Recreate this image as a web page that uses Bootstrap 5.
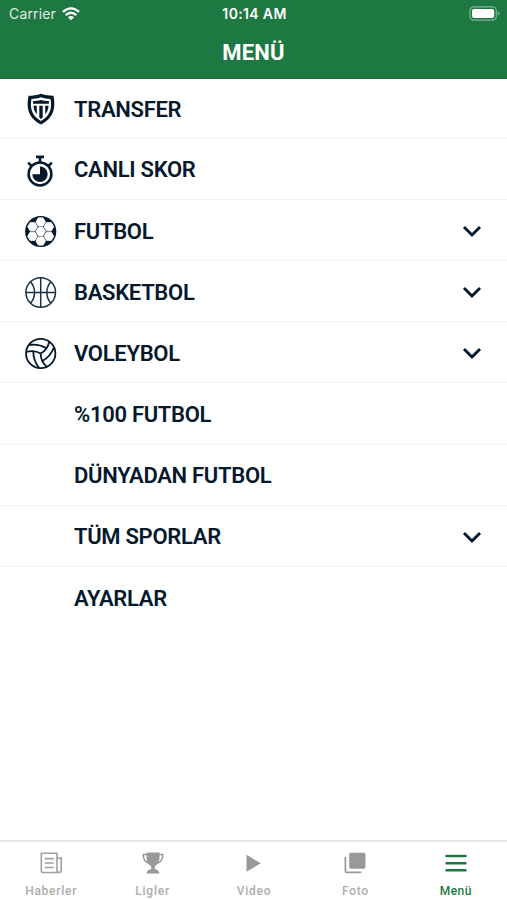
<!DOCTYPE html>
<html lang="tr">
<head>
<meta charset="utf-8">
<meta name="viewport" content="width=device-width, initial-scale=1">
<title>Menü</title>
<link href="https://cdn.jsdelivr.net/npm/bootstrap@5.3.0/dist/css/bootstrap.min.css" rel="stylesheet">
<style>
body{font-family:Roboto,"Liberation Sans",sans-serif;color:#05192d;height:100vh;overflow:hidden}
svg{display:block;flex:none}
.app-head{background:#1d7841;height:79px;border-bottom:1px solid #1a6c3a}
.status-bar{height:27px;padding:0 7px 0 9px;font:400 14px/27px Inter,sans-serif}
.status-bar>div{flex:1 1 0}
.clock{font-weight:600;font-size:14px;letter-spacing:.35px}
.carrier{color:#e0efe5;letter-spacing:.15px}
.app-title{font-size:22px;font-weight:700;line-height:51px;letter-spacing:.15px;margin:0}
.menu-row{height:61.15px;border:0;border-bottom:1px solid #f3f3f3;border-radius:0;padding:3px 25px 0 24px;color:#05192d;background:#fff}
.menu-row:first-child{height:59.8px}
.menu-row:last-child{border-bottom:0}
.menu-label{font-size:22px;font-weight:600;line-height:26px;letter-spacing:-.3px;margin-left:17px;white-space:nowrap}
.menu-icon{width:33px;height:33px}
.tab-strip{height:60px;border-top:2px solid #e8e8e8;background:#fff}
.tab-strip .nav-link{padding:9px 0 0 1px;color:#adadad;font:500 12px/14px Roboto,sans-serif;letter-spacing:.75px}
.tab-strip .nav-link.active{color:#1d7841;letter-spacing:.5px;padding-left:0;padding-right:1px}
.tab-strip svg{margin-bottom:9px}
</style>
</head>
<body class="d-flex flex-column bg-white">
<header class="app-head text-white flex-shrink-0">
  <div class="status-bar d-flex align-items-center">
    <div class="carrier d-flex align-items-center gap-2"><span>Carrier</span>
      <svg width="18" height="14" viewBox="0 0 18 14" fill="none" stroke="#fff" stroke-width="2.3" style="margin-left:-2px"><path d="M.9 4.9Q9-2.2 17.1 4.9"/><path d="M3.7 8.1Q9 3.4 14.3 8.1"/><path d="M9 13.3 5.9 10.3Q9 7.7 12.1 10.3Z" fill="#fff" stroke="none"/></svg>
    </div>
    <div class="clock text-center text-nowrap">10:14 AM</div>
    <div class="d-flex justify-content-end">
      <svg width="31" height="15" viewBox="0 0 31 15"><rect x=".9" y=".9" width="26.4" height="13.2" rx="3.8" fill="none" stroke="#7db592" stroke-width="1.2"/><rect x="3" y="3" width="22.2" height="9" rx="2" fill="#fff"/><path d="M28.8 5.2q1.7.8 1.7 2.3t-1.7 2.3z" fill="#7db592"/></svg>
    </div>
  </div>
  <h1 class="app-title text-center">MENÜ</h1>
</header>

<main class="list-group list-group-flush flex-grow-1">
  <a class="menu-row list-group-item d-flex align-items-center" href="#">
    <svg class="menu-icon" viewBox="0 0 33 33"><path d="M17 .8c4 1.500 8.300 1.800 12.400 2C31.800 13.500 30.500 25 17 31.600 3.500 25 2.200 13.500 4.600 2.800c4.100 0 8.400-.5 12.400-2z" fill="#05192d"/><path d="M17 4.300c3.200 1.100 6.300 1.500 9.500 1.600C28.200 14 26.800 22.300 17 28 7.200 22.300 5.800 14 7.500 5.900 10.700 5.800 13.800 5.400 17 4.300z" fill="#fff"/><path d="M9.200 8c2.900-.1 5.300-.4 7.800-1 2.500.6 4.900.9 7.800 1l.1 2.700H9z" fill="#05192d"/><path d="M9.400 12.700h3.400v8.600c-2-2.200-3.100-5-3.400-8.600zM15.300 12.700h3.400v11.800L17 26l-1.700-1.500zM21.200 12.700h3.400c-.3 3.600-1.400 6.400-3.400 8.600z" fill="#05192d"/></svg>
    <span class="menu-label">TRANSFER</span>
  </a>
  <a class="menu-row list-group-item d-flex align-items-center" href="#">
    <svg class="menu-icon" viewBox="0 0 33 33" fill="none" stroke="#05192d"><circle cx="16" cy="20" r="11.400" stroke-width="2.500"/><path d="M12 2.900h8" stroke-width="2.700"/><path d="M16 3v6" stroke-width="2.600"/><path d="M4.200 8.700l3 3M27.800 8.700l-3 3" stroke-width="2.600"/><path d="M16 20V12.600a7.700 7.700 0 1 1-7.700 7.700H16z" fill="#05192d" stroke="none"/></svg>
    <span class="menu-label">CANLI SKOR</span>
  </a>
  <a class="menu-row list-group-item d-flex align-items-center" href="#">
    <svg class="menu-icon" viewBox="-16.700 -16.500 33 33"><defs><path id="hex" d="M-4.700 0-2.350-4.070H2.350L4.700 0 2.350 4.070H-2.350z"/></defs><circle r="15.600" fill="#05192d"/><g fill="#fff" stroke="#fff" stroke-width="1" stroke-linejoin="round"><use href="#hex"/><use href="#hex" y="-9.500"/><use href="#hex" y="9.500"/><use href="#hex" x="-8.230" y="-4.750"/><use href="#hex" x="-8.230" y="4.750"/><use href="#hex" x="8.230" y="-4.750"/><use href="#hex" x="8.230" y="4.750"/></g></svg>
    <span class="menu-label">FUTBOL</span>
    <svg class="ms-auto" width="20" height="13" viewBox="0 0 20 13" fill="none" stroke="#05192d" stroke-width="2.900"><path d="M2 2l8 8 8-8"/></svg>
  </a>
  <a class="menu-row list-group-item d-flex align-items-center" href="#">
    <svg class="menu-icon" viewBox="0 0 33 33" fill="none" stroke="#1b3043" stroke-width="1.500"><circle cx="16.700" cy="16.500" r="14.800"/><path d="M16.700 1.600v29.800M1.800 16.500h29.800M6.500 5.800c5.400 6 5.400 15.400 0 21.400M26.900 5.800c-5.400 6-5.400 15.400 0 21.400"/></svg>
    <span class="menu-label">BASKETBOL</span>
    <svg class="ms-auto" width="20" height="13" viewBox="0 0 20 13" fill="none" stroke="#05192d" stroke-width="2.900"><path d="M2 2l8 8 8-8"/></svg>
  </a>
  <a class="menu-row list-group-item d-flex align-items-center" href="#">
    <svg class="menu-icon" viewBox="-16.700 -16.500 33 33" fill="none" stroke="#05192d" stroke-width="1.800"><defs><path id="seam" d="M0 0Q-6.500-4-14.500-1.500M5.700-5.300Q-2.500-10-11.500-8.500"/></defs><circle r="14.700"/><use href="#seam"/><use href="#seam" transform="rotate(120)"/><use href="#seam" transform="rotate(240)"/></svg>
    <span class="menu-label">VOLEYBOL</span>
    <svg class="ms-auto" width="20" height="13" viewBox="0 0 20 13" fill="none" stroke="#05192d" stroke-width="2.900"><path d="M2 2l8 8 8-8"/></svg>
  </a>
  <a class="menu-row list-group-item d-flex align-items-center" href="#"><span class="menu-icon"></span><span class="menu-label">%100 FUTBOL</span></a>
  <a class="menu-row list-group-item d-flex align-items-center" href="#"><span class="menu-icon"></span><span class="menu-label">DÜNYADAN FUTBOL</span></a>
  <a class="menu-row list-group-item d-flex align-items-center" href="#"><span class="menu-icon"></span><span class="menu-label">TÜM SPORLAR</span>
    <svg class="ms-auto" width="20" height="13" viewBox="0 0 20 13" fill="none" stroke="#05192d" stroke-width="2.900"><path d="M2 2l8 8 8-8"/></svg>
  </a>
  <a class="menu-row list-group-item d-flex align-items-center" href="#"><span class="menu-icon"></span><span class="menu-label">AYARLAR</span></a>
</main>

<nav class="tab-strip nav nav-fill flex-nowrap flex-shrink-0">
  <a class="nav-link w-100 d-flex flex-column align-items-center" href="#">
    <svg width="24" height="24" viewBox="0 0 24 24" fill="none" stroke="#a0a0a0" stroke-width="1.600"><path d="M18 18.500V2.300H2.300v17.500q0 1.700 1.700 1.700h16.300q1.900 0 1.900-2V7H18v12q0 2.400 2.200 2.400M5.800 7.600h9M5.800 12h9M5.800 16.500h9"/></svg>Haberler</a>
  <a class="nav-link w-100 d-flex flex-column align-items-center" href="#">
    <svg width="24" height="24" viewBox="0 0 24 24" fill="#999"><path d="M5.500 1.500h13v5c0 4.500-2.200 7.500-4.700 8.500v3c2.200.3 4.200 1.500 4.700 4.500h-13c.5-3 2.500-4.200 4.700-4.500v-3C7.700 14 5.500 11 5.500 6.500z"/><path d="M6.500 3.500H2.200c0 4.700 2.300 8.500 7 9.300M17.500 3.500h4.300c0 4.700-2.300 8.500-7 9.300" fill="none" stroke="#999" stroke-width="1.500"/></svg>Ligler</a>
  <a class="nav-link w-100 d-flex flex-column align-items-center" href="#">
    <svg width="24" height="24" viewBox="0 0 24 24" fill="#999"><path d="M4.500 3.800v17L18.800 12.300z"/></svg>Video</a>
  <a class="nav-link w-100 d-flex flex-column align-items-center" href="#">
    <svg width="24" height="24" viewBox="0 0 24 24"><rect x="6.200" y="1.800" width="16.300" height="16" rx="1.800" fill="#999"/><path d="M2.400 6v14q0 1.400 1.400 1.400h14.500" fill="none" stroke="#999" stroke-width="1.700"/></svg>Foto</a>
  <a class="nav-link active w-100 d-flex flex-column align-items-center" href="#">
    <svg width="24" height="24" viewBox="0 0 24 24" stroke="#1d7841" stroke-width="2.500"><path d="M1.500 5h21M1.500 12.200h21M1.500 19.300h21"/></svg>Menü</a>
</nav>
<script src="https://cdn.jsdelivr.net/npm/bootstrap@5.3.0/dist/js/bootstrap.bundle.min.js"></script>
</body>
</html>
